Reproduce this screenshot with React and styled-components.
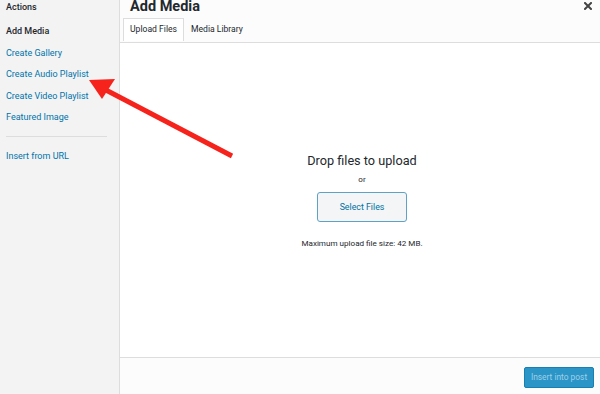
import React from "react";
import styled, { createGlobalStyle } from "styled-components";

const Global = createGlobalStyle`
  html, body { margin: 0; padding: 0; background: #fff; }
  body { font-family: Roboto, "Liberation Sans", Arial, sans-serif; }
  #root { width: 600px; height: 394px; overflow: hidden; }
`;

const Frame = styled.div`
  position: relative;
  width: 600px;
  height: 394px;
  display: flex;
  overflow: hidden;
  color: #23282d;
`;

const Sidebar = styled.aside`
  width: 120px;
  flex: none;
  background: #f3f3f3;
  border-right: 1px solid #dddddd;
  display: flex;
  flex-direction: column;
  padding: 0 12px 0 6px;
  box-sizing: border-box;
`;

const SideHeading = styled.div`
  font-size: 9px;
  font-weight: 500;
  line-height: 14px;
  color: #23282d;
`;

const MenuItem = styled.div`
  font-size: 9px;
  line-height: 14px;
  margin-top: ${(p) => p.$gap || 7.5}px;
  color: ${(p) => (p.$active ? "#23282d" : "#0073aa")};
  font-weight: ${(p) => (p.$active ? 500 : 400)};
  white-space: nowrap;
`;

const Separator = styled.div`
  height: 1px;
  background: #dddddd;
  margin: 11.5px 0 0 0;
`;

const Main = styled.main`
  flex: 1;
  display: flex;
  flex-direction: column;
  min-width: 0;
`;

const Header = styled.header`
  background: #fcfcfc;
  border-bottom: 1px solid #dddddd;
  padding: 0 0 0 3px;
  height: 43px;
  box-sizing: border-box;
  position: relative;
  display: flex;
  flex-direction: column;
`;

const Title = styled.h1`
  margin: 1px 0 0 7px;
  font-size: 14.5px;
  font-weight: 700;
  line-height: 12px;
  height: 12px;
  color: #23282d;
`;

const CloseButton = styled.div`
  position: absolute;
  right: 8px;
  top: 2px;
  width: 8px;
  height: 8px;
  display: flex;
`;

const Tabs = styled.div`
  display: flex;
  margin-top: 5px;
  height: 22px;
  align-items: flex-end;
`;

const Tab = styled.div`
  font-size: 8.6px;
  line-height: 20px;
  padding: 0 6px;
  color: #23282d;
  box-sizing: border-box;
  height: 23px;
  border: 1px solid ${(p) => (p.$active ? "#dddddd" : "transparent")};
  border-bottom: none;
  background: ${(p) => (p.$active ? "#ffffff" : "transparent")};
  margin-bottom: -1px;
  position: relative;
  z-index: 1;
`;

const Content = styled.section`
  flex: 1;
  background: #fff;
  display: flex;
  flex-direction: column;
  align-items: center;
  padding: 109px 0 0 4px;
  box-sizing: border-box;
`;

const DropText = styled.div`
  font-size: 12.7px;
  line-height: 18px;
  color: #23282d;
`;

const Or = styled.div`
  font-size: 8px;
  line-height: 12px;
  margin-top: 4px;
  color: #23282d;
`;

const SelectButton = styled.div`
  margin-top: 6px;
  width: 90px;
  height: 30px;
  box-sizing: border-box;
  border: 1.5px solid #5ea2c6;
  border-radius: 3px;
  background: #f3f5f6;
  color: #0071a1;
  font-size: 8.8px;
  display: flex;
  align-items: center;
  justify-content: center;
`;

const MaxSize = styled.div`
  margin-top: 15px;
  font-size: 8.1px;
  line-height: 12px;
  color: #23282d;
`;

const Footer = styled.footer`
  height: 37px;
  flex: none;
  background: #fcfcfc;
  border-top: 1px solid #dddddd;
  display: flex;
  align-items: center;
  justify-content: flex-end;
  padding-right: 6px;
  box-sizing: border-box;
`;

const InsertButton = styled.div`
  width: 70px;
  height: 21px;
  box-sizing: border-box;
  background: #2b95c7;
  border: 1px solid #1a7fb0;
  border-radius: 2px;
  color: #9fd0e8;
  font-size: 8.4px;
  display: flex;
  align-items: center;
  justify-content: center;
  margin-top: 2px;
`;

const ArrowSvg = styled.svg`
  position: absolute;
  left: 0;
  top: 0;
  pointer-events: none;
`;

export default function App() {
  return (
    <>
      <Global />
      <Frame>
        <Sidebar>
          <SideHeading>Actions</SideHeading>
          <MenuItem $active $gap={10}>Add Media</MenuItem>
          <MenuItem>Create Gallery</MenuItem>
          <MenuItem>Create Audio Playlist</MenuItem>
          <MenuItem>Create Video Playlist</MenuItem>
          <MenuItem>Featured Image</MenuItem>
          <Separator />
          <MenuItem $gap={12}>Insert from URL</MenuItem>
        </Sidebar>
        <Main>
          <Header>
            <Title>Add Media</Title>
            <CloseButton aria-label="Close">
              <svg width="8" height="8" viewBox="0 0 8 8">
                <path d="M1 1 L7 7 M7 1 L1 7" stroke="#444" strokeWidth="2" strokeLinecap="square" />
              </svg>
            </CloseButton>
            <Tabs>
              <Tab $active>Upload Files</Tab>
              <Tab>Media Library</Tab>
            </Tabs>
          </Header>
          <Content>
            <DropText>Drop files to upload</DropText>
            <Or>or</Or>
            <SelectButton>Select Files</SelectButton>
            <MaxSize>Maximum upload file size: 42 MB.</MaxSize>
          </Content>
          <Footer>
            <InsertButton>Insert into post</InsertButton>
          </Footer>
        </Main>
        <ArrowSvg width="600" height="394" viewBox="0 0 600 394">
          <line x1="232" y1="156" x2="104" y2="89" stroke="#f5231b" strokeWidth="5" />
          <polygon points="89,80 115,79 102,99" fill="#f5231b" />
        </ArrowSvg>
      </Frame>
    </>
  );
}
